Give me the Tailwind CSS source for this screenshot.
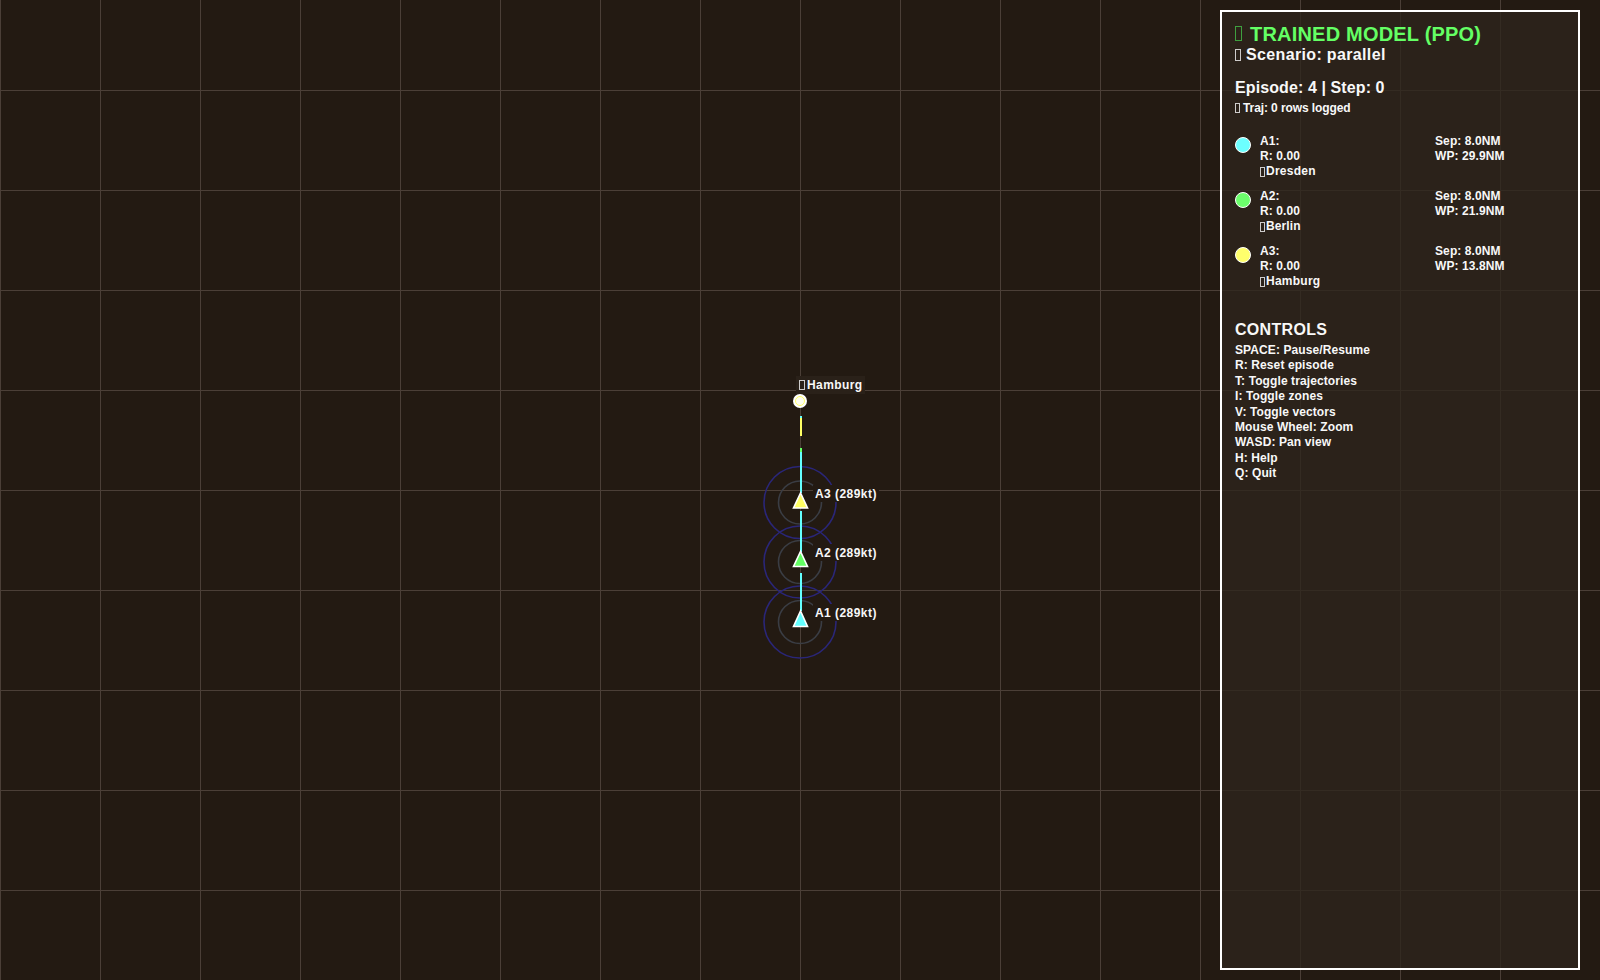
<!DOCTYPE html>
<html lang="en">
<head>
  <meta charset="UTF-8" />
  <title>Trained Model Viewer</title>
  <script src="https://cdn.jsdelivr.net/npm/@tailwindcss/browser@4"></script>
</head>
<body class="m-0 overflow-hidden">
  <!-- radar view -->
  <div class="relative w-[1600px] h-[980px] overflow-hidden font-['Liberation_Sans',sans-serif] font-bold text-[#f8f8f8] bg-[#231a12] bg-[linear-gradient(to_right,#4b3f37_1px,transparent_1px),linear-gradient(to_bottom,#4b3f37_1px,transparent_1px)] bg-[size:100px_100px] bg-[position:0_90px]">

    <svg class="absolute inset-0" width="1600" height="980" viewBox="0 0 1600 980" fill="none">
      <!-- zones -->
      <circle cx="800" cy="502.5" r="36" stroke="#2a2678" stroke-width="1.6" />
      <circle cx="800" cy="502.5" r="21.5" stroke="#3a3d44" stroke-width="1.6" />
      <circle cx="800" cy="562" r="36" stroke="#2a2678" stroke-width="1.6" />
      <circle cx="800" cy="562" r="21.5" stroke="#3a3d44" stroke-width="1.6" />
      <circle cx="800" cy="622" r="36" stroke="#2a2678" stroke-width="1.6" />
      <circle cx="800" cy="622" r="21.5" stroke="#3a3d44" stroke-width="1.6" />
      <!-- heading vectors -->
      <g shape-rendering="crispEdges">
        <rect x="800" y="416" width="2" height="2" fill="#64ffff" />
        <rect x="800" y="418" width="2" height="18" fill="#ffff64" />
        <rect x="800" y="448" width="2" height="4" fill="#64ff64" />
        <rect x="800" y="452" width="2" height="41" fill="#64ffff" />
        <rect x="800" y="511" width="2" height="41" fill="#64ffff" />
        <rect x="800" y="573" width="2" height="38" fill="#64ffff" />
      </g>
      <!-- waypoint -->
      <circle cx="800" cy="401" r="7" fill="#ffffff" />
      <circle cx="800" cy="401" r="4.5" fill="#fffff0" stroke="#ffff64" stroke-width="1" />
      <!-- aircraft -->
      <polygon points="800.5,493 793.5,508 807.5,508" fill="#ffff64" stroke="#ffffff" stroke-width="1.6" />
      <polygon points="800.5,551.5 793.5,566.5 807.5,566.5" fill="#64ff64" stroke="#ffffff" stroke-width="1.6" />
      <polygon points="800.5,611 793.5,626.5 807.5,626.5" fill="#64ffff" stroke="#ffffff" stroke-width="1.6" />
    </svg>

    <!-- map labels -->
    <div class="absolute left-[796px] top-[376px] h-[18px] px-[3px] flex items-center gap-[2px] bg-[#2a2119] text-[12px] tracking-[0.4px] leading-none">
      <span class="inline-block w-[6px] h-[10px] border border-current opacity-80"></span><span>Hamburg</span>
    </div>
    <div class="absolute left-[813px] top-[485px] h-[17px] px-[2px] flex items-center bg-[#231a12] text-[12px] tracking-[0.45px] leading-none">A3 (289kt)</div>
    <div class="absolute left-[813px] top-[544px] h-[17px] px-[2px] flex items-center bg-[#231a12] text-[12px] tracking-[0.45px] leading-none">A2 (289kt)</div>
    <div class="absolute left-[813px] top-[604px] h-[17px] px-[2px] flex items-center bg-[#231a12] text-[12px] tracking-[0.45px] leading-none">A1 (289kt)</div>

    <!-- info panel -->
    <aside class="absolute left-[1220px] top-[10px] w-[360px] h-[960px] border-2 border-white bg-[#2e251cc7] pl-[13px] pt-[10px]">
      <h1 class="flex items-center gap-[8px] h-[23.5px] text-[20px] tracking-[0.2px] leading-none text-[#64ff64]">
        <span class="inline-block w-[7px] h-[15px] border border-[#3fa03f]"></span><span>TRAINED MODEL (PPO)</span>
      </h1>
      <p class="flex items-center gap-[5px] h-[18px] text-[16px] tracking-[0.35px] leading-none">
        <span class="inline-block w-[6px] h-[12px] border border-current opacity-80"></span><span>Scenario: parallel</span>
      </p>
      <p class="mt-[15.5px] h-[18px] text-[16px] tracking-[0.1px] leading-[18px]">Episode: 4 | Step: 0</p>
      <p class="mt-[2.5px] flex items-center gap-[3px] h-[16px] text-[12px] tracking-[-0.1px] leading-none">
        <span class="inline-block w-[5px] h-[10px] border border-current opacity-80"></span><span>Traj: 0 rows logged</span>
      </p>

      <ul class="mt-[18.5px] flex flex-col text-[12px] tracking-[0.1px] leading-[15px]">
        <li class="flex h-[55px]">
          <span class="mt-[3px] w-[16px] h-[16px] rounded-full border-[1.5px] border-white bg-[#6cffff]"></span>
          <div class="ml-[9px] w-[175px]">
            <p>A1:</p>
            <p>R: 0.00</p>
            <p class="flex items-center gap-[1px] tracking-[0.25px]"><span class="inline-block w-[5px] h-[10px] border border-current opacity-80"></span>Dresden</p>
          </div>
          <div><p>Sep: 8.0NM</p><p>WP: 29.9NM</p></div>
        </li>
        <li class="flex h-[55px]">
          <span class="mt-[3px] w-[16px] h-[16px] rounded-full border-[1.5px] border-white bg-[#6cff6c]"></span>
          <div class="ml-[9px] w-[175px]">
            <p>A2:</p>
            <p>R: 0.00</p>
            <p class="flex items-center gap-[1px]"><span class="inline-block w-[5px] h-[10px] border border-current opacity-80"></span>Berlin</p>
          </div>
          <div><p>Sep: 8.0NM</p><p>WP: 21.9NM</p></div>
        </li>
        <li class="flex h-[55px]">
          <span class="mt-[3px] w-[16px] h-[16px] rounded-full border-[1.5px] border-white bg-[#ffff6c]"></span>
          <div class="ml-[9px] w-[175px]">
            <p>A3:</p>
            <p>R: 0.00</p>
            <p class="flex items-center gap-[1px] tracking-[0.25px]"><span class="inline-block w-[5px] h-[10px] border border-current opacity-80"></span>Hamburg</p>
          </div>
          <div><p>Sep: 8.0NM</p><p>WP: 13.8NM</p></div>
        </li>
      </ul>

      <h2 class="mt-[21px] h-[23px] text-[16px] tracking-[0.3px] leading-[20px]">CONTROLS</h2>
      <ul class="text-[12px] tracking-[0.1px] leading-[15.4px]">
        <li>SPACE: Pause/Resume</li>
        <li>R: Reset episode</li>
        <li>T: Toggle trajectories</li>
        <li>I: Toggle zones</li>
        <li>V: Toggle vectors</li>
        <li>Mouse Wheel: Zoom</li>
        <li>WASD: Pan view</li>
        <li>H: Help</li>
        <li>Q: Quit</li>
      </ul>
    </aside>
  </div>
</body>
</html>
